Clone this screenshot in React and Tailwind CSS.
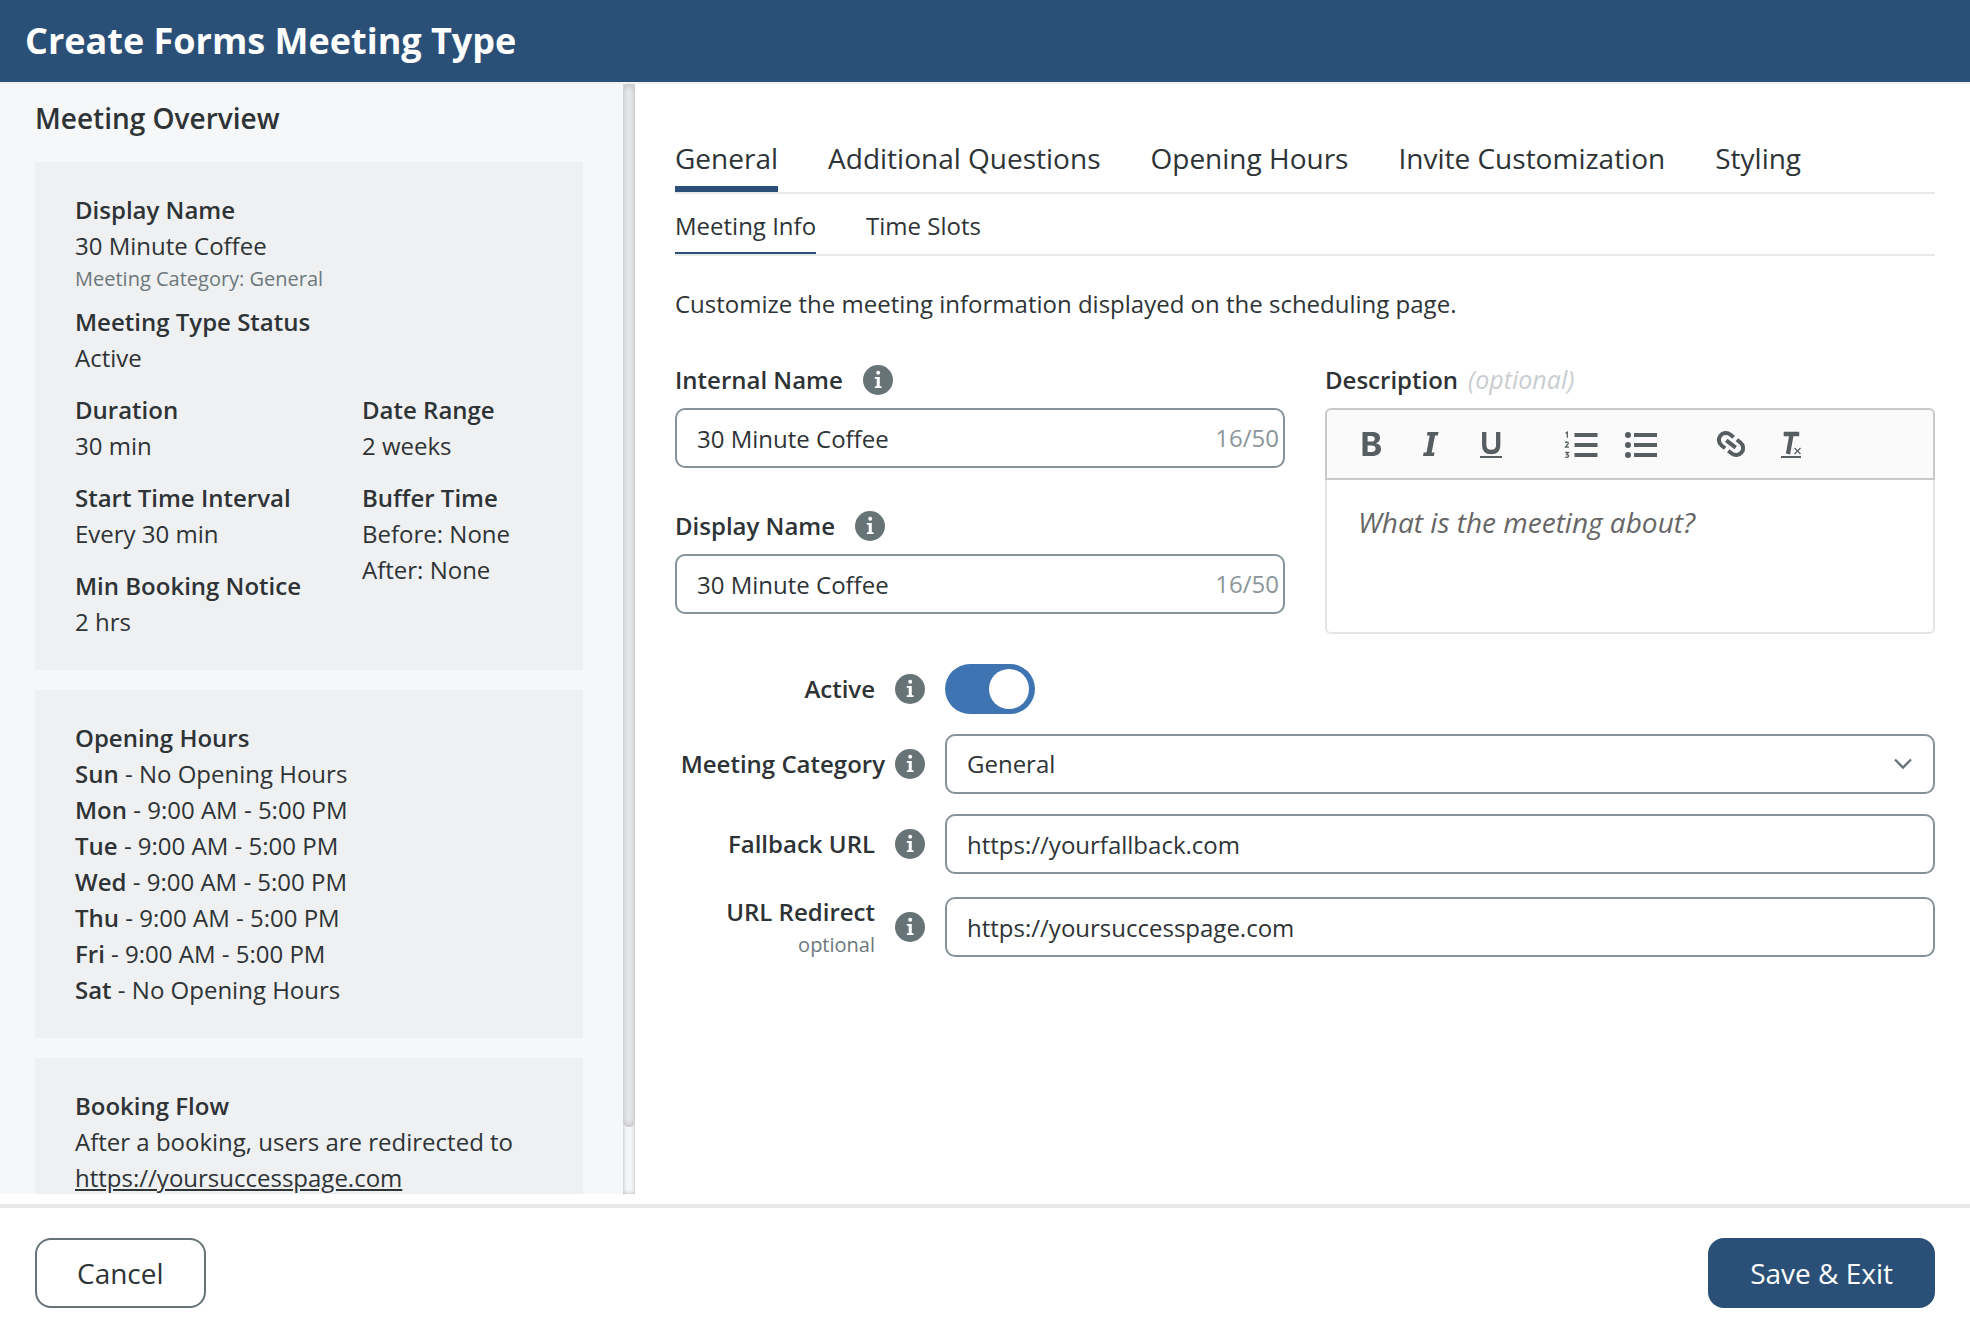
import { useState } from "react";

const TABS = ["General", "Additional Questions", "Opening Hours", "Invite Customization", "Styling"];
const SUB_TABS = ["Meeting Info", "Time Slots"];
const HOURS = [
  ["Sun", "No Opening Hours"],
  ["Mon", "9:00 AM - 5:00 PM"],
  ["Tue", "9:00 AM - 5:00 PM"],
  ["Wed", "9:00 AM - 5:00 PM"],
  ["Thu", "9:00 AM - 5:00 PM"],
  ["Fri", "9:00 AM - 5:00 PM"],
  ["Sat", "No Opening Hours"],
];

const FIELD =
  "block h-[60px] w-full rounded-[10px] border-2 border-[#859398] bg-white px-5 text-2xl text-[#2e3336] outline-none";

function InfoIcon() {
  return (
    <svg className="size-[30px] shrink-0" viewBox="0 0 30 30" aria-hidden="true">
      <circle cx="15" cy="15" r="15" fill="#667377" />
      <circle cx="15.2" cy="7.8" r="2" fill="#fff" />
      <path d="M11.8 12h5v9.2h1.8v1.8h-6.8v-1.8h1.9v-7.4h-1.9z" fill="#fff" />
    </svg>
  );
}

function Card({ children }) {
  return <section className="bg-[#eff0f2] px-10 py-[30px]">{children}</section>;
}

function Item({ title, lines }) {
  return (
    <div>
      <h3 className="font-semibold">{title}</h3>
      {lines.map((line) => (
        <p key={line}>{line}</p>
      ))}
    </div>
  );
}

function Sidebar() {
  return (
    <aside className="flex w-[635px] shrink-0 bg-[#f6f7f9]">
      <div className="min-w-0 flex-1 overflow-hidden pr-10 pl-[35px]">
        <h2 className="pt-[14px] pb-6 text-[28px] leading-10 font-semibold">Meeting Overview</h2>
        <div className="flex flex-col gap-5 text-2xl leading-9">
          <Card>
            <Item title="Display Name" lines={["30 Minute Coffee"]} />
            <p className="mb-[10px] text-xl leading-[30px] text-[#6b787c]">Meeting Category: General</p>
            <Item title="Meeting Type Status" lines={["Active"]} />
            <div className="mt-4 flex">
              <div className="flex w-[287px] flex-col gap-4">
                <Item title="Duration" lines={["30 min"]} />
                <Item title="Start Time Interval" lines={["Every 30 min"]} />
                <Item title="Min Booking Notice" lines={["2 hrs"]} />
              </div>
              <div className="flex flex-col gap-4">
                <Item title="Date Range" lines={["2 weeks"]} />
                <Item title="Buffer Time" lines={["Before: None", "After: None"]} />
              </div>
            </div>
          </Card>
          <Card>
            <h3 className="font-semibold">Opening Hours</h3>
            {HOURS.map(([day, time]) => (
              <p key={day}>
                <span className="font-semibold">{day}</span> - {time}
              </p>
            ))}
          </Card>
          <Card>
            <h3 className="font-semibold">Booking Flow</h3>
            <p>After a booking, users are redirected to</p>
            <a href="#success" className="underline">https://yoursuccesspage.com</a>
          </Card>
        </div>
      </div>
      <div className="w-3 bg-[#f6f7f9] shadow-[inset_0_0_4px_#b5b5b5]">
        <div className="h-[94%] rounded-full bg-[#e8e9eb] shadow-[inset_0_0_6px_#b5b5b5]" />
      </div>
    </aside>
  );
}

function CountedField({ id, label }) {
  const [value, setValue] = useState("30 Minute Coffee");
  return (
    <div>
      <div className="flex h-14 items-center gap-5">
        <label htmlFor={id} className="font-semibold">{label}</label>
        <InfoIcon />
      </div>
      <div className="relative">
        <input id={id} maxLength={50} value={value} onChange={(e) => setValue(e.target.value)} className={FIELD} />
        <span className="absolute inset-y-0 right-[6px] flex items-center text-[#8a9599]">{value.length}/50</span>
      </div>
    </div>
  );
}

function ToolButton({ label, children }) {
  return (
    <button type="button" aria-label={label} className="flex h-9 w-[60px] items-center justify-center">
      <svg className="size-9" viewBox="0 0 36 36" fill="none" stroke="#565e62" aria-hidden="true">
        {children}
      </svg>
    </button>
  );
}

function Editor() {
  return (
    <div>
      <div className="flex h-14 items-center gap-[10px]">
        <label htmlFor="description" className="font-semibold">Description</label>
        <span className="text-[25px] text-[#c9cdd0] italic">(optional)</span>
      </div>
      <div className="flex h-[72px] items-center rounded-t-md border-2 border-[#c9caca] bg-[#fafafa] pl-[14px]">
        <ToolButton label="Bold">
          <path d="M9.500 6h9c5.500 0 8.500 1.800 8.500 6 0 2.700-1.600 4.600-4.200 5.200 3.300.5 5.200 2.500 5.200 5.800 0 4.700-3.500 7-9 7H9.500zM14.600 10v5.600h3.600c2.400 0 3.600-1 3.600-2.900 0-1.900-1.300-2.700-3.800-2.700zM14.600 19.500V26h4c2.700 0 4-1.200 4-3.400 0-2.100-1.400-3.100-4.200-3.100z" fill="#565e62" fillRule="evenodd" stroke="none" />
        </ToolButton>
        <ToolButton label="Italic">
          <path d="M14.500 6h11l-.6 3.500h-2.900L18.700 26.500h2.800l-.6 3.500H10l.6-3.500h2.900L16.700 9.500h-2.800z" fill="#565e62" stroke="none" />
        </ToolButton>
        <ToolButton label="Underline">
          <path d="M11.200 6v13.200c0 4.800 2.300 6.800 7 6.800s7-2 7-6.800V6" strokeWidth="4.300" />
          <path d="M7 31h22" strokeWidth="2" />
        </ToolButton>
        <div className="w-[30px]" />
        <ToolButton label="Numbered list">
          <path d="M11.500 9h23M11.500 19h23M11.500 29h23" strokeWidth="4" />
          <path d="M2.500 7.200L4.300 6.200v5.500M2.300 17c.8-1.600 3.500-1.200 2.900.6L2.500 21.200h3.500M2.300 26.500h3L3.800 28.500c2.800 0 2.300 3.700-1.700 2.600" strokeWidth="1.300" />
        </ToolButton>
        <ToolButton label="Bulleted list">
          <path d="M11 9h23M11 19h23M11 29h23" strokeWidth="4" />
          <path d="M5 9h.01M5 19h.01M5 29h.01" strokeWidth="6" strokeLinecap="round" />
        </ToolButton>
        <div className="w-[30px]" />
        <ToolButton label="Link">
          <g transform="rotate(38 18 18)" strokeWidth="4">
            <path d="M16 11h-4.500a7 7 0 0 0 0 14H16M20 11h4.500a7 7 0 0 1 0 14H20M12 18h12" />
          </g>
        </ToolButton>
        <ToolButton label="Clear formatting">
          <path d="M10.700 8h15.500M18.600 8L15 28" strokeWidth="4.300" />
          <path d="M8 31h20" strokeWidth="2" />
          <path d="M21.500 22l6 6M27.500 22L21.500 28" strokeWidth="1.200" />
        </ToolButton>
      </div>
      <textarea
        id="description"
        placeholder="What is the meeting about?"
        className="block h-[154px] w-full resize-none rounded-b-md border-2 border-t-0 border-[#e3e5e9] bg-white px-[31px] py-[22px] text-[28px] leading-10 outline-none placeholder:text-[#666] placeholder:italic"
      />
    </div>
  );
}

function Row({ id, label, note, wide, children }) {
  return (
    <div className="flex items-center">
      <div className={wide ? "mr-[10px] w-[210px] text-right" : "mr-5 w-[200px] text-right"}>
        <label htmlFor={id} className="block leading-9 font-semibold whitespace-nowrap">{label}</label>
        {note && <p className="text-xl leading-[30px] text-[#6b787c]">{note}</p>}
      </div>
      <InfoIcon />
      <div className="ml-5 min-w-0 flex-1">{children}</div>
    </div>
  );
}

function Main() {
  return (
    <main className="min-w-0 flex-1 overflow-hidden pr-[35px] pl-10 text-2xl">
      <nav className="flex gap-[50px] border-b-2 border-[#e8e9ea] pt-12 text-[28px] leading-10">
        {TABS.map((tab, i) => (
          <button
            key={tab}
            type="button"
            className={i === 0 ? "border-b-6 border-[#2b5078] pt-[6px] pb-2" : "border-b-6 border-transparent pt-[6px] pb-2"}
          >
            {tab}
          </button>
        ))}
      </nav>
      <nav className="flex gap-[50px] border-b-2 border-[#e8e9ea] leading-9">
        {SUB_TABS.map((tab, i) => (
          <button
            key={tab}
            type="button"
            className={i === 0 ? "border-b-2 border-[#2b5078] pt-[14px] pb-2" : "border-b-2 border-transparent pt-[14px] pb-2"}
          >
            {tab}
          </button>
        ))}
      </nav>
      <p className="pt-[30px] leading-9">Customize the meeting information displayed on the scheduling page.</p>
      <div className="mt-[30px] grid grid-cols-2 gap-x-10">
        <div className="flex flex-col gap-[30px]">
          <CountedField id="internal" label="Internal Name" />
          <CountedField id="display" label="Display Name" />
        </div>
        <Editor />
      </div>
      <div className="mt-[30px] flex flex-col gap-5">
        <Row id="active" label="Active">
          <input
            id="active"
            type="checkbox"
            role="switch"
            defaultChecked
            className="block h-[50px] w-[90px] appearance-none rounded-full bg-[#a9b2b6] p-[5px] before:block before:size-10 before:rounded-full before:bg-white checked:bg-[#3f74b3] checked:before:ml-[39px]"
          />
        </Row>
        <Row id="category" label="Meeting Category" wide>
          <div className="relative">
            <select id="category" className={`${FIELD} appearance-none`}>
              <option>General</option>
            </select>
            <svg className="pointer-events-none absolute top-5 right-[22px] size-5" viewBox="0 0 20 20" fill="none" stroke="#667377" strokeWidth="2.300" aria-hidden="true">
              <path d="M2 5.500l8 8 8-8" />
            </svg>
          </div>
        </Row>
        <Row id="fallback" label="Fallback URL">
          <input id="fallback" defaultValue="https://yourfallback.com" className={FIELD} />
        </Row>
        <Row id="redirect" label="URL Redirect" note="optional">
          <input id="redirect" defaultValue="https://yoursuccesspage.com" className={FIELD} />
        </Row>
      </div>
    </main>
  );
}

export default function App() {
  return (
    <div className="flex h-screen flex-col bg-white font-['Open_Sans',sans-serif] text-[#2e3336]">
      <header className="border-b-2 border-[#eff1f3] bg-[#2b5078] px-[25px]">
        <h1 className="py-4 text-4xl leading-[50px] font-bold text-white">Create Forms Meeting Type</h1>
      </header>
      <div className="flex min-h-0 flex-1">
        <Sidebar />
        <Main />
      </div>
      <footer className="mt-[10px] flex justify-between border-t-4 border-[#e7e8ea] px-[35px] pt-[30px] pb-7 text-[28px]">
        <button type="button" className="h-[70px] rounded-2xl border-2 border-[#667377] px-10">Cancel</button>
        <button type="button" className="h-[70px] rounded-2xl bg-[#2b5078] px-[42px] text-white">{"Save & Exit"}</button>
      </footer>
    </div>
  );
}
